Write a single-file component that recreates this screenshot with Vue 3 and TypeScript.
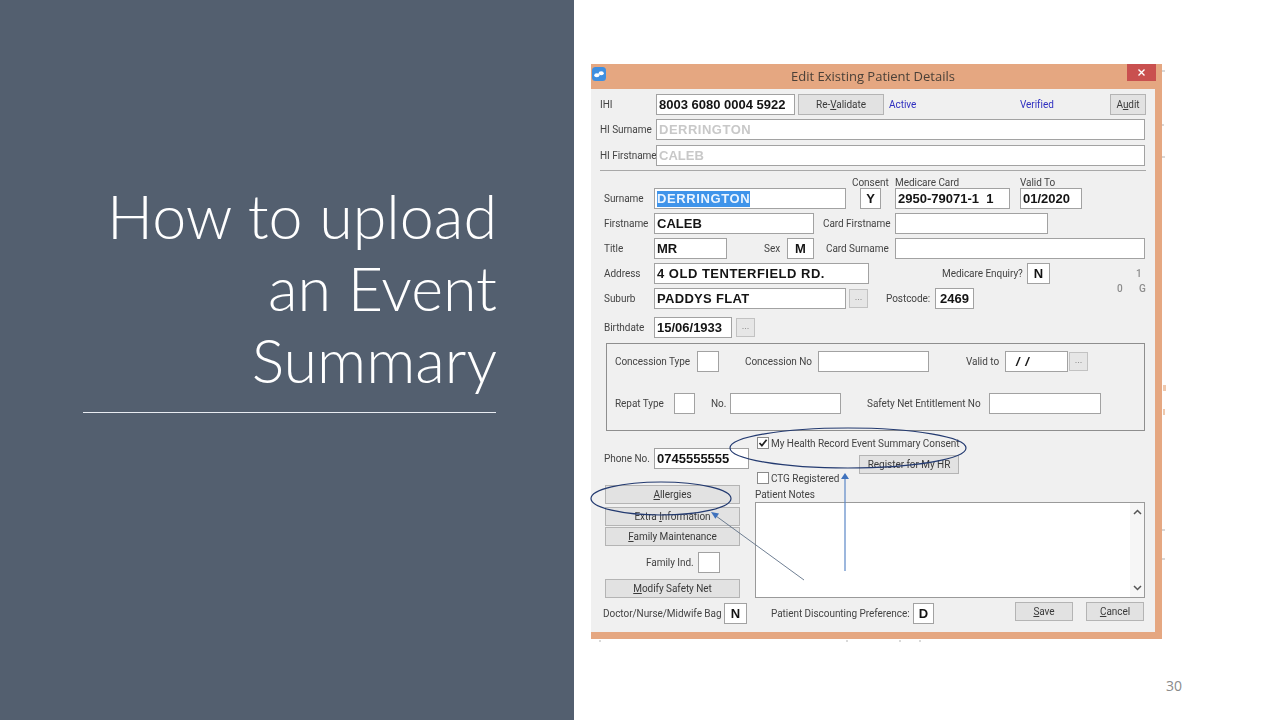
<template>
  <div class="slide">
    <aside class="panel">
      <h1>How to upload<br />an Event<br />Summary</h1>
      <div class="rule" />
    </aside>

    <main class="stage">
      <section class="dialog">
        <header class="titlebar">
          <svg class="app-icon" width="16" height="16" viewBox="0 0 16 16">
            <rect x="1" y="1" width="14" height="14" rx="3.5" fill="#3f8fe0" />
            <ellipse cx="5.8" cy="9.2" rx="2.6" ry="2" fill="#fff" />
            <ellipse cx="10.2" cy="7.2" rx="2.6" ry="2" fill="#fff" />
          </svg>
          <span class="title">Edit Existing Patient Details</span>
          <span class="close">
            <svg width="9" height="9" viewBox="0 0 9 9">
              <path d="M1.5 1.5l6 6M7.5 1.5l-6 6" stroke="#fff" stroke-width="1.4" />
            </svg>
          </span>
        </header>

        <form class="client" @submit.prevent>
          <div class="row">
            <span class="lbl w56">IHI</span>
            <span class="fld w139 val">8003 6080 0004 5922</span>
            <button class="btn w86 revalidate">Re-<u>V</u>alidate</button>
            <span class="lbl blue w131 ml5">Active</span>
            <span class="lbl blue w90">Verified</span>
            <button class="btn w36"><span>A<u>u</u>dit</span></button>
          </div>
          <div class="row gap4">
            <span class="lbl w56">HI Surname</span>
            <span class="fld w489 val dim spaced">DERRINGTON</span>
          </div>
          <div class="row gap5">
            <span class="lbl w56">HI Firstname</span>
            <span class="fld w489 val dim">CALEB</span>
          </div>
          <div class="separator" />

          <div class="caption-row">
            <span class="lbl w43 ml252">Consent</span>
            <span class="lbl w125">Medicare Card</span>
            <span class="lbl">Valid To</span>
          </div>
          <div class="row ind4">
            <span class="lbl w50">Surname</span>
            <span class="fld w192 val"><span class="selected">DERRINGTON</span></span>
            <span class="fld w21 val center ml14">Y</span>
            <span class="fld w115 val ml14">2950-79071-1&nbsp;&nbsp;1</span>
            <span class="fld w62 val ml10">01/2020</span>
          </div>
          <div class="row gap4 ind4">
            <span class="lbl w50">Firstname</span>
            <span class="fld w160 val">CALEB</span>
            <span class="lbl w72 ml9">Card Firstname</span>
            <span class="fld w153" />
          </div>
          <div class="row gap4 ind4">
            <span class="lbl w50">Title</span>
            <span class="fld w73 val">MR</span>
            <span class="lbl w23 ml37">Sex</span>
            <span class="fld w27 val center">M</span>
            <span class="lbl w69 ml12">Card Surname</span>
            <span class="fld w250" />
          </div>
          <div class="row gap4 ind4">
            <span class="lbl w50">Address</span>
            <span class="fld w215 val address">4 OLD TENTERFIELD RD.</span>
            <span class="lbl w85 ml73">Medicare Enquiry?</span>
            <span class="fld w23 val center">N</span>
            <span class="lbl ghost ml86">1</span>
          </div>
          <div class="row gap4 ind4">
            <span class="lbl w50">Suburb</span>
            <span class="fld w192 val suburb">PADDYS FLAT</span>
            <button class="dots">...</button>
            <span class="lbl w49 ml18">Postcode:</span>
            <span class="fld w39 val center">2469</span>
            <span class="lbl ghost raised w22 ml143">0</span>
            <span class="lbl ghost raised">G</span>
          </div>
          <div class="row gap8 ind4">
            <span class="lbl w50">Birthdate</span>
            <span class="fld w78 val">15/06/1933</span>
            <button class="dots ml4">...</button>
          </div>

          <fieldset class="group">
            <div class="row">
              <span class="lbl w82">Concession Type</span>
              <span class="fld w22" />
              <span class="lbl w73 ml26">Concession No</span>
              <span class="fld w111" />
              <span class="lbl w39 ml37">Valid to</span>
              <span class="fld w63 val slashes">/ /</span>
              <button class="dots ml1">...</button>
            </div>
            <div class="row gap21">
              <span class="lbl w59">Repat Type</span>
              <span class="fld w21" />
              <span class="lbl w19 ml16">No.</span>
              <span class="fld w111" />
              <span class="lbl w122 ml26">Safety Net Entitlement No</span>
              <span class="fld w112" />
            </div>
          </fieldset>

          <div class="lower">
            <div class="lower-left">
              <div class="row">
                <span class="lbl w50">Phone No.</span>
                <span class="fld w95 val">0745555555</span>
              </div>
              <button class="btn wide first"><span><u>A</u>llergies</span></button>
              <button class="btn wide"><span>Extra <u>I</u>nformation</span></button>
              <button class="btn wide tight"><span><u>F</u>amily Maintenance</span></button>
              <div class="row family">
                <span class="lbl w52 ml42">Family Ind.</span>
                <span class="fld w22" />
              </div>
              <button class="btn wide last"><span><u>M</u>odify Safety Net</span></button>
            </div>

            <div class="lower-right">
              <div class="check-row">
                <span class="check on">
                  <svg width="10" height="10" viewBox="0 0 10 10">
                    <path d="M1.5 5l2.4 2.6L8.6 1.8" fill="none" stroke="#222" stroke-width="1.7" />
                  </svg>
                </span>
                <span class="lbl">My Health Record Event Summary Consent</span>
              </div>
              <button class="btn register">Register for My HR</button>
              <div class="check-row ctg">
                <span class="check" />
                <span class="lbl">CTG Registered</span>
              </div>
              <span class="lbl notes-label">Patient Notes</span>
              <div class="notes">
                <div class="scroll">
                  <svg width="9" height="6" viewBox="0 0 9 6"><path d="M1 5l3.5-3.5L8 5" fill="none" stroke="#555" stroke-width="1.5" /></svg>
                  <svg width="9" height="6" viewBox="0 0 9 6"><path d="M1 1l3.5 3.5L8 1" fill="none" stroke="#555" stroke-width="1.5" /></svg>
                </div>
              </div>
            </div>
          </div>

          <div class="row bottom">
            <span class="lbl w121">Doctor/Nurse/Midwife Bag</span>
            <span class="fld w23 val center">N</span>
            <span class="lbl w142 ml24">Patient Discounting Preference:</span>
            <span class="fld w21 val center">D</span>
            <button class="btn save"><span><u>S</u>ave</span></button>
            <button class="btn save cancel"><span><u>C</u>ancel</span></button>
          </div>
        </form>
      </section>

      <span class="page-no">30</span>
    </main>

    <svg class="notes-overlay" width="1280" height="720" viewBox="0 0 1280 720">
      <ellipse cx="661" cy="498.5" rx="70" ry="16.5" fill="none" stroke="#233a70" stroke-width="1.2" />
      <ellipse cx="848" cy="448" rx="118" ry="20" fill="none" stroke="#233a70" stroke-width="1.2" />
      <path d="M845 571V476" stroke="#5b87c7" stroke-width="1.2" />
      <path d="M845 473l-4 6h8z" fill="#3f72bd" />
      <path d="M804 580L716 516" stroke="#5f7187" stroke-width="0.9" />
      <path d="M711 512l8 1.5-3.6 5.2z" fill="#3f72bd" />
      <!-- bits of the slide behind the dialog that show round its edge -->
      <path d="M1162 71h3M1162 125h2M1162 157h3M1162 530h3M1162 559h3M600 640v2M847 640v2M900 640v2M920 640v2" stroke="#b5b5b5" stroke-width="1" />
      <path d="M1163 388h3M1163 412h2" stroke="#efc9ae" stroke-width="6" />
    </svg>
  </div>
</template>

<script setup lang="ts"></script>

<style>
html,
body {
  margin: 0;
  background: #fff;
}
</style>

<style scoped>
.slide {
  width: 1280px;
  height: 720px;
  display: flex;
  position: relative;
  overflow: hidden;
  background: #fff;
  font-family: Roboto, "Liberation Sans", Arial, sans-serif;
}
.panel {
  width: 574px;
  box-sizing: border-box;
  padding: 180px 77px 0 83px;
  background: #535f6f;
  flex: none;
}
h1 {
  margin: 0;
  color: #fff;
  font-family: Lato, "Open Sans", sans-serif;
  font-weight: 300;
  font-size: 61px;
  line-height: 72px;
  text-align: right;
}
.rule {
  height: 1px;
  margin-top: 16px;
  margin-right: 1px;
  background: #e8ecf2;
}
.stage {
  flex: 1;
  display: flex;
  flex-direction: column;
  padding: 64px 0 0 17px;
}
.dialog {
  width: 571px;
  height: 575px;
  box-sizing: border-box;
  background: #e5a781;
  padding-right: 7px;
  filter: blur(0.3px);
}
.titlebar {
  height: 25px;
  display: flex;
  align-items: center;
  position: relative;
}
.app-icon {
  position: absolute;
  left: 0;
  top: 2px;
}
.title {
  width: 100%;
  padding-bottom: 2px;
  text-align: center;
  font-family: "Open Sans", sans-serif;
  font-size: 13px;
  color: #4a4038;
}
.close {
  position: absolute;
  right: -1px;
  top: 0;
  width: 29px;
  height: 17px;
  background: #c9504f;
  display: flex;
  align-items: center;
  justify-content: center;
}
.client {
  height: 543px;
  box-sizing: border-box;
  padding: 5px 0 0 9px;
  background: #f0f0f0;
  font-size: 10px;
  letter-spacing: -0.05px;
  color: #444;
}
.row {
  display: flex;
  align-items: center;
  height: 21px;
}
.gap4 { margin-top: 4px; }
.gap5 { margin-top: 5px; }
.gap8 { margin-top: 8px; }
.gap21 { margin-top: 21px; }
.ind4 { margin-left: 4px; }

.lbl {
  flex: none;
  white-space: nowrap;
}
.blue { color: #2f2fc0; }
.ghost { color: #8c8c8c; font-weight: 500; }
.raised { margin-bottom: 20px; }
.fld {
  flex: none;
  height: 21px;
  box-sizing: border-box;
  border: 1px solid #a2a2a2;
  background: #fff;
  display: flex;
  align-items: center;
  padding-left: 2px;
  overflow: hidden;
  white-space: nowrap;
}
.val {
  font-family: "Liberation Sans", Arial, sans-serif;
  font-size: 13px;
  letter-spacing: 0;
  font-weight: bold;
  color: #141414;
}
.center {
  justify-content: center;
  padding-left: 0;
}
.dim {
  color: #c8c8c8;
}
.spaced { letter-spacing: 0.5px; }
.address { letter-spacing: 0.5px; }
.suburb { letter-spacing: 0.3px; }
.selected {
  background: #3f94ea;
  color: #eaf4ff;
  line-height: 16px;
  letter-spacing: 0.6px;
}
.slashes {
  font-style: italic;
  padding-left: 10px;
  word-spacing: 2px;
}
.separator {
  height: 1px;
  margin: 4px 0 0;
  width: 546px;
  background: #a8a8a8;
}
.caption-row {
  display: flex;
  align-items: flex-end;
  height: 17px;
}
.caption-row .lbl {
  line-height: 10px;
}
.btn {
  flex: none;
  height: 21px;
  padding: 0;
  box-sizing: border-box;
  border: 1px solid #b4b4b4;
  background: #e2e2e2;
  color: #3a3a3a;
  font: inherit;
  letter-spacing: inherit;
  text-align: center;
}
.dots {
  flex: none;
  width: 19px;
  height: 19px;
  margin-left: 3px;
  padding: 0 0 4px;
  box-sizing: border-box;
  border: 1px solid #c2c2c2;
  background: #e6e6e6;
  color: #888;
  font: 9px "Liberation Sans", Arial, sans-serif;
}
.dots.ml1 { margin-left: 1px; }
.dots.ml4 { margin-left: 4px; }

.group {
  width: 539px;
  height: 88px;
  margin: 5px 0 0 6px;
  padding: 7px 0 0 8px;
  box-sizing: border-box;
  border: 1px solid #8e8e8e;
  min-width: 0;
}
.lower {
  display: flex;
  margin-top: 6px;
}
.lower-left {
  width: 155px;
  flex: none;
  padding-top: 11px;
  padding-left: 4px;
  box-sizing: border-box;
}
.wide {
  display: block;
  width: 135px;
  height: 19px;
  margin: 3px 0 0 1px;
}
.wide.first { margin-top: 16px; }
.wide.tight { margin-top: 1px; }
.wide.last { margin-top: 6px; }
.family {
  margin-top: 6px;
}
.lower-right {
  flex: 1;
  display: flex;
  flex-direction: column;
}
.check-row {
  display: flex;
  align-items: center;
  gap: 2px;
  height: 12px;
  padding-left: 2px;
}
.ctg {
  margin-top: -2px;
}
.check {
  width: 12px;
  height: 12px;
  box-sizing: border-box;
  border: 1px solid #8a8a8a;
  background: #fff;
  display: flex;
  align-items: center;
  justify-content: center;
}
.register {
  width: 100px;
  height: 19px;
  margin: 6px 0 0 104px;
}
.notes-label {
  margin-top: 5px;
  height: 12px;
  line-height: 12px;
}
.notes {
  width: 390px;
  height: 96px;
  margin-top: 1px;
  box-sizing: border-box;
  border: 1px solid #9a9a9a;
  background: #fff;
  display: flex;
  justify-content: flex-end;
}
.scroll {
  width: 14px;
  background: #f6f6f6;
  display: flex;
  flex-direction: column;
  justify-content: space-between;
  align-items: center;
  padding: 6px 0;
  box-sizing: border-box;
}
.bottom {
  margin-top: 5px;
  margin-left: 3px;
}
.save {
  width: 58px;
  height: 19px;
  margin-left: 81px;
  align-self: flex-start;
  margin-top: -1px;
}
.save.cancel { margin-left: 13px; }

.w19 { width: 19px; }
.w21 { width: 21px; }
.w22 { width: 22px; }
.w23 { width: 23px; }
.w27 { width: 27px; }
.w36 { width: 36px; }
.w39 { width: 39px; }
.w43 { width: 43px; }
.w49 { width: 49px; }
.w50 { width: 50px; }
.w52 { width: 52px; }
.w56 { width: 56px; }
.w59 { width: 59px; }
.w62 { width: 62px; }
.w63 { width: 63px; }
.w69 { width: 69px; }
.w72 { width: 72px; }
.w73 { width: 73px; }
.w78 { width: 78px; }
.w82 { width: 82px; }
.w85 { width: 85px; }
.w86 { width: 86px; }
.w90 { width: 90px; }
.w95 { width: 95px; }
.w111 { width: 111px; }
.w112 { width: 112px; }
.w115 { width: 115px; }
.w121 { width: 121px; }
.w122 { width: 122px; }
.w125 { width: 125px; }
.w131 { width: 131px; }
.w139 { width: 139px; }
.w142 { width: 142px; }
.w153 { width: 153px; }
.w160 { width: 160px; }
.w192 { width: 192px; }
.w215 { width: 215px; }
.w250 { width: 250px; }
.w489 { width: 489px; }

.ml5 { margin-left: 5px; }
.ml9 { margin-left: 9px; }
.ml10 { margin-left: 10px; }
.ml12 { margin-left: 12px; }
.ml14 { margin-left: 14px; }
.ml16 { margin-left: 16px; }
.ml18 { margin-left: 18px; }
.ml24 { margin-left: 24px; }
.ml26 { margin-left: 26px; }
.ml37 { margin-left: 37px; }
.ml42 { margin-left: 42px; }
.ml73 { margin-left: 73px; }
.ml86 { margin-left: 86px; }
.ml143 { margin-left: 143px; }
.ml252 { margin-left: 252px; }

.revalidate { margin-left: 3px; }
.page-no {
  margin: 37px 98px 0 0;
  align-self: flex-end;
  font-family: "Open Sans", sans-serif;
  font-size: 14px;
  color: #8a8a8a;
}
.notes-overlay {
  position: absolute;
  left: 0;
  top: 0;
  pointer-events: none;
}
</style>
